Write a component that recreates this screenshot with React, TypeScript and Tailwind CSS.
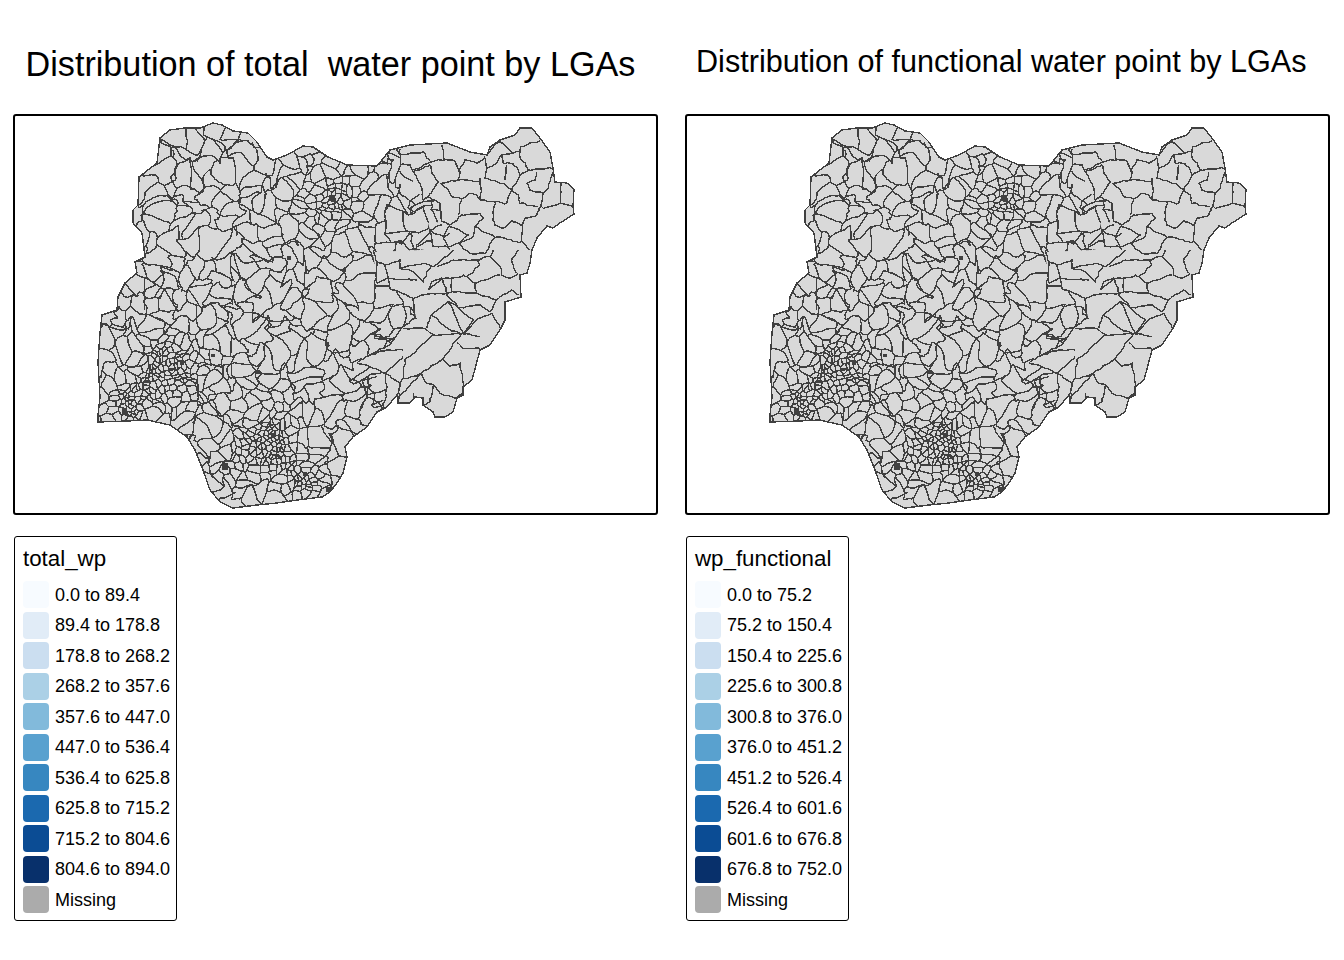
import React from "react";

type P = [number, number];

const OUTLINE: P[] = [
  [160,138],[170,130],[185,128],[200,128],[213,123],[222,125],[233,131],[248,133],[257,142],[267,157],[273,160],[287,155],[303,146],[313,147],[328,157],[347,165],[377,166],[390,150],[410,145],[447,143],[470,152],[487,155],[490,147],[500,140],[515,135],[520,128],[532,128],[540,138],[550,152],[553,168],[555,182],[567,183],[574,189],[573,207],[574,214],[560,223],[553,228],[547,226],[537,238],[532,250],[530,263],[527,273],[520,275],[521,297],[505,302],[505,320],[500,330],[490,345],[480,350],[472,380],[463,387],[463,395],[457,398],[453,412],[445,417],[435,417],[433,412],[423,405],[423,398],[415,397],[410,403],[398,403],[397,395],[387,407],[377,412],[367,427],[353,437],[345,447],[347,457],[343,473],[337,483],[330,492],[322,497],[297,500],[277,503],[257,505],[233,508],[220,502],[210,490],[203,470],[195,450],[187,437],[170,425],[147,420],[127,421],[98,422],[98,415],[100,397],[98,362],[100,333],[102,315],[117,310],[118,297],[125,283],[137,273],[135,262],[145,257],[142,233],[133,223],[133,210],[138,205],[139,177],[157,163],
];

// Limit of the generated western mesh; everything east of it is traced by hand.
const CUT: P[] = [
  [400,115],[400,148],[400,165],[412,167],[413,183],[423,200],[428,197],[440,203],[442,222],[428,223],[430,230],[433,247],[420,250],[373,252],[377,283],[388,278],[390,288],[413,298],[416,318],[403,327],[390,345],[365,357],[357,363],[367,365],[385,373],[383,407],[383,440],
];

const Z2_LINES: number[][] = [
  [510,125,520,130,545,160,570,155,572,140,630,122],
  [570,155,575,180,595,210,665,205],
  [462,170,470,205,500,190,515,165,545,160],
  [470,165,490,140,510,125],
  [515,165,520,190,540,190,560,200,570,225,595,210],
  [470,205,465,235,520,250,545,270,570,225],
  [530,195,525,240],
  [620,215,615,240,590,250,600,270,640,280,655,265,670,205],
  [640,280,632,320,640,325,690,310,725,318],
  [690,310,692,245],
  [545,270,565,285,570,310,625,320],
  [632,320,620,345,585,355,578,378,545,362,520,385,495,375,490,350,495,305,450,300],
  [495,305,530,310,545,270],
  [450,235,452,300,440,285,420,280,395,297,365,290,352,265,332,250],
  [332,250,385,240,450,245],
  [300,195,305,215,325,245,295,290,330,310,335,365,360,375,395,345,450,340,460,355,435,380,430,410,385,430],
  [345,180,305,185,250,210],
  [375,182,390,215,385,240],
  [385,215,405,180,440,190,462,175],
  [335,135,345,178,375,182],
  [210,148,212,195],
  [210,165,280,155,290,175,300,182],
  [395,297,385,345],
  [212,195,240,195,250,215,300,195],
  [250,215,270,250,280,300,295,290],
  [335,375,300,390,340,410,360,375],
  [300,390,310,440,360,440,385,430],
  [360,380,415,405,385,430],
  [360,400,340,415,360,450],
  [435,380,495,412,540,418,550,425,575,425,578,378],
  [575,425,600,450],
  [385,430,420,460,465,460,495,412],
];

const Z4_LINES: number[][] = [
  [370,0,380,35,405,45,450,30,450,55,520,40,550,50,600,10,610,0],
  [380,35,378,70,380,100],
  [450,55,490,65,520,95,535,60,550,50],
  [380,100,415,85,500,90],
  [405,45,415,85],
  [415,85,420,115,490,145,535,132,590,130,575,85,535,120],
  [535,120,545,95,575,85,600,85,640,75,650,80,690,45,680,30,610,30,560,50],
  [680,30,720,20,750,50,755,75,780,85,805,70],
  [730,0,720,20],
  [590,130,605,125,680,130,675,100,650,80],
  [605,85,605,125],
  [675,100,750,75],
  [680,130,740,150,720,185,690,165,625,175,590,130],
  [740,150,785,120,805,135],
  [805,0,785,30,800,70],
  [490,145,497,205,460,230,420,285,345,322,320,340],
  [460,235,525,235,550,255,465,330,460,385,475,385,515,370,580,325,635,250,550,255],
  [345,322,410,300,460,300],
  [530,235,545,195,595,155,625,175],
  [545,195,600,240,635,250],
  [595,155,640,250],
  [625,175,670,210,640,250,680,210,725,190,750,235],
  [635,250,690,260],
  [620,275,640,295,690,295],
  [580,325,600,350,630,340,640,400,640,430,615,445,570,430,550,405,530,400,515,370],
  [550,405,540,455,520,465],
  [515,370,445,440],
  [460,320,405,370,450,400,445,460],
  [405,370,350,345,320,340],
  [405,370,410,420,350,435,335,390,380,380],
  [410,420,400,470,385,490],
  [450,400,460,385],
  [490,430,490,455],
];

function rng(seed: number) {
  let a = seed;
  return () => {
    a = (a + 0x6d2b79f5) | 0;
    let t = Math.imul(a ^ (a >>> 15), 1 | a);
    t = (t + Math.imul(t ^ (t >>> 7), 61 | t)) ^ t;
    return ((t ^ (t >>> 14)) >>> 0) / 4294967296;
  };
}

function inside(x: number, y: number) {
  let c = false;
  for (let i = 0, j = OUTLINE.length - 1; i < OUTLINE.length; j = i++) {
    const [xi, yi] = OUTLINE[i];
    const [xj, yj] = OUTLINE[j];
    if (yi > y !== yj > y && x < ((xj - xi) * (y - yi)) / (yj - yi) + xi) c = !c;
  }
  return c;
}

const CLUSTERS: [number, number, number, number][] = [
  [330, 197, 30, 0.8],
  [172, 368, 26, 0.72],
  [125, 408, 18, 0.65],
  [272, 445, 22, 0.8],
  [308, 483, 18, 0.78],
  [232, 470, 20, 0.4],
  [255, 400, 38, 0.35],
  [150, 385, 40, 0.3],
];

function spacing(x: number, y: number) {
  let s = 0;
  for (const [cx, cy, sg, w] of CLUSTERS) {
    const d = (x - cx) ** 2 + (y - cy) ** 2;
    s += w * Math.exp(-d / (2 * sg * sg));
  }
  return Math.max(3.6, 19.5 * (1 - Math.min(s, 0.85)));
}

const noiseR = rng(7);
const GRID: number[] = Array.from({ length: 4096 }, () => noiseR() * 2 - 1);
function vnoise(x: number, y: number, off: number) {
  const xi = Math.floor(x);
  const yi = Math.floor(y);
  const fx = x - xi;
  const fy = y - yi;
  const sx = fx * fx * (3 - 2 * fx);
  const sy = fy * fy * (3 - 2 * fy);
  const g = (a: number, b: number) => GRID[(((a * 31 + b * 57 + off) % 4096) + 4096) % 4096];
  const top = g(xi, yi) * (1 - sx) + g(xi + 1, yi) * sx;
  const bot = g(xi, yi + 1) * (1 - sx) + g(xi + 1, yi + 1) * sx;
  return top * (1 - sy) + bot * sy;
}

function warp(x: number, y: number): P {
  const a = spacing(x, y) * 0.6;
  const dx = a * vnoise(x / 12, y / 12, 11) + 0.16 * a * vnoise(x / 4, y / 4, 311);
  const dy = a * vnoise(x / 12, y / 12, 977) + 0.16 * a * vnoise(x / 4, y / 4, 1733);
  return [x + dx, y + dy];
}

function wiggle(x: number, y: number): P {
  return [x + 1.1 * vnoise(x / 4, y / 4, 55), y + 1.1 * vnoise(x / 4, y / 4, 2055)];
}

function buildEdges() {
  const r = rng(2024);
  const sites: P[] = [];
  for (let i = 0; i < 30000; i++) {
    const x = 95 + r() * 485;
    const y = 120 + r() * 392;
    if (!inside(x, y)) continue;
    const sp = spacing(x, y) * (0.55 + 0.95 * r());
    let ok = true;
    for (const s of sites) {
      if (Math.hypot(s[0] - x, s[1] - y) < sp) {
        ok = false;
        break;
      }
    }
    if (ok) sites.push([x, y]);
  }
  const seen = new Set<string>();
  let d = "";
  const key = (p: P) => `${p[0].toFixed(1)},${p[1].toFixed(1)}`;
  sites.forEach((s, idx) => {
    let cell: P[] = [
      [s[0] - 60, s[1] - 60],
      [s[0] + 60, s[1] - 60],
      [s[0] + 60, s[1] + 60],
      [s[0] - 60, s[1] + 60],
    ];
    const others = sites
      .map((o, j) => ({ o, j, q: (o[0] - s[0]) ** 2 + (o[1] - s[1]) ** 2 }))
      .filter((e) => e.j !== idx && e.q < 14400)
      .sort((a, b) => a.q - b.q);
    for (const { o } of others) {
      const mx = (s[0] + o[0]) / 2;
      const my = (s[1] + o[1]) / 2;
      const nx = o[0] - s[0];
      const ny = o[1] - s[1];
      const out: P[] = [];
      for (let i = 0; i < cell.length; i++) {
        const a = cell[i];
        const b = cell[(i + 1) % cell.length];
        const da = (a[0] - mx) * nx + (a[1] - my) * ny;
        const db = (b[0] - mx) * nx + (b[1] - my) * ny;
        if (da <= 0) out.push(a);
        if (da < 0 !== db < 0) {
          const t = da / (da - db);
          out.push([a[0] + (b[0] - a[0]) * t, a[1] + (b[1] - a[1]) * t]);
        }
      }
      cell = out;
      if (!cell.length) break;
    }
    for (let i = 0; i < cell.length; i++) {
      const a = cell[i];
      const b = cell[(i + 1) % cell.length];
      const ka = key(a);
      const kb = key(b);
      const k = ka < kb ? ka + "|" + kb : kb + "|" + ka;
      if (seen.has(k)) continue;
      seen.add(k);
      const [p, q] = ka < kb ? [a, b] : [b, a];
      const len = Math.hypot(q[0] - p[0], q[1] - p[1]);
      if (len > 120) continue;
      const n = Math.max(1, Math.ceil(len / 3));
      for (let t = 0; t <= n; t++) {
        const w = warp(p[0] + ((q[0] - p[0]) * t) / n, p[1] + ((q[1] - p[1]) * t) / n);
        d += (t === 0 ? "M" : "L") + w[0].toFixed(1) + " " + w[1].toFixed(1);
      }
    }
  });
  return d;
}

function tracedPath(pts: P[]) {
  let d = "";
  for (let i = 0; i < pts.length - 1; i++) {
    const [a, b] = [pts[i], pts[i + 1]];
    const len = Math.hypot(b[0] - a[0], b[1] - a[1]);
    const n = Math.max(1, Math.ceil(len / 3));
    for (let t = i === 0 ? 0 : 1; t <= n; t++) {
      const atEnd = t === 0 || t === n;
      const x = a[0] + ((b[0] - a[0]) * t) / n;
      const y = a[1] + ((b[1] - a[1]) * t) / n;
      const w = atEnd ? ([x, y] as P) : wiggle(x, y);
      d += (i === 0 && t === 0 ? "M" : "L") + w[0].toFixed(1) + " " + w[1].toFixed(1);
    }
  }
  return d;
}

function fromZoom(list: number[][], ox: number, oy: number) {
  return list
    .map((flat) => {
      const pts: P[] = [];
      for (let i = 0; i < flat.length; i += 2) pts.push([ox + flat[i] / 3, oy + flat[i + 1] / 3]);
      return tracedPath(pts);
    })
    .join("");
}

const EDGES = buildEdges();
const TRACED = fromZoom(Z2_LINES, 330, 100) + fromZoom(Z4_LINES, 250, 250);
const OUTLINE_D = "M" + OUTLINE.map((p) => p.join(" ")).join("L") + "Z";
const WEST_D = "M90 115L" + CUT.map((p) => p.join(" ")).join("L") + "L383 520L90 520Z";

const EXTRA = "M144.5 277L144.5 310M144.5 277L165 290L178 312";

const BLOBS: [number, number, number, number][] = [
  [329,195,6,6],[287,256,4,4],[180,360,4,5],[145,380,5,3],[122,408,5,7],[222,463,6,7],[271,433,4,4],[326,487,6,5],[303,472,4,4],[275,454,4,3],[168,368,5,3],[211,354,4,3],
];

function NigeriaMap({ id }: { id: string }) {
  return (
    <svg viewBox="15 116 641 397" className="block w-[641px] h-[397px]" shapeRendering="crispEdges">
      <defs>
        <clipPath id={id}>
          <path d={OUTLINE_D} />
        </clipPath>
        <clipPath id={`${id}-west`}>
          <path d={WEST_D} />
        </clipPath>
      </defs>
      <path d={OUTLINE_D} fill="#d9d9d9" />
      <g clipPath={`url(#${id})`}>
        <g clipPath={`url(#${id}-west)`}>
          <path d={EDGES} fill="none" stroke="#404040" strokeWidth={1.4} />
        </g>
        <path d={TRACED + EXTRA} fill="none" stroke="#404040" strokeWidth={1.4} />
        {BLOBS.map(([x, y, w, h]) => (
          <rect key={`${x}-${y}`} x={x} y={y} width={w} height={h} fill="#404040" />
        ))}
      </g>
      <path d={OUTLINE_D} fill="none" stroke="#404040" strokeWidth={1.4} />
    </svg>
  );
}

const COLORS = [
  "bg-[#f7fbff]","bg-[#e1ecf7]","bg-[#cbdef0]","bg-[#abd0e6]","bg-[#82badb]","bg-[#59a1cf]","bg-[#3787c0]","bg-[#1b69af]","bg-[#0b4c94]","bg-[#08306b]","bg-[#ababab]",
];

function Legend({ title, items }: { title: string; items: string[] }) {
  return (
    <div className="ml-[14px] mt-[21px] w-[163px] h-[385px] border border-black rounded-[3px] pl-[8px] pt-[8px]">
      <div className="h-[34.5px] text-[22.3px] leading-[28px] text-black">{title}</div>
      {items.map((t, i) => (
        <div key={t} className="flex items-center h-[30.5px]">
          <div className={`w-[26px] h-[27px] rounded-[4px] ${COLORS[i]}`} />
          <span className="ml-[6px] text-[18px] leading-none whitespace-nowrap text-black">{t}</span>
        </div>
      ))}
    </div>
  );
}

function Panel({
  title,
  titleClass,
  legend,
  items,
  id,
}: {
  title: string;
  titleClass: string;
  legend: string;
  items: string[];
  id: string;
}) {
  return (
    <div className="w-[672px]">
      <div className="h-[114px]">
        <div className={`whitespace-pre text-black ${titleClass}`}>{title}</div>
      </div>
      <div className="ml-[13px] w-[645px] h-[401px] border-2 border-black rounded-[3px] bg-white">
        <NigeriaMap id={id} />
      </div>
      <Legend title={legend} items={items} />
    </div>
  );
}

export default function App() {
  return (
    <div className="flex w-[1344px] h-[960px] bg-white overflow-hidden font-['Liberation_Sans',Arial,sans-serif]">
      <Panel
        id="map-total"
        title="Distribution of total  water point by LGAs"
        titleClass="text-[34.2px] leading-[40px] pt-[44px] pl-[25.5px]"
        legend="total_wp"
        items={["0.0 to 89.4","89.4 to 178.8","178.8 to 268.2","268.2 to 357.6","357.6 to 447.0","447.0 to 536.4","536.4 to 625.8","625.8 to 715.2","715.2 to 804.6","804.6 to 894.0","Missing"]}
      />
      <Panel
        id="map-functional"
        title="Distribution of functional water point by LGAs"
        titleClass="text-[30.6px] leading-[36px] pt-[43px] pl-[24px]"
        legend="wp_functional"
        items={["0.0 to 75.2","75.2 to 150.4","150.4 to 225.6","225.6 to 300.8","300.8 to 376.0","376.0 to 451.2","451.2 to 526.4","526.4 to 601.6","601.6 to 676.8","676.8 to 752.0","Missing"]}
      />
    </div>
  );
}
